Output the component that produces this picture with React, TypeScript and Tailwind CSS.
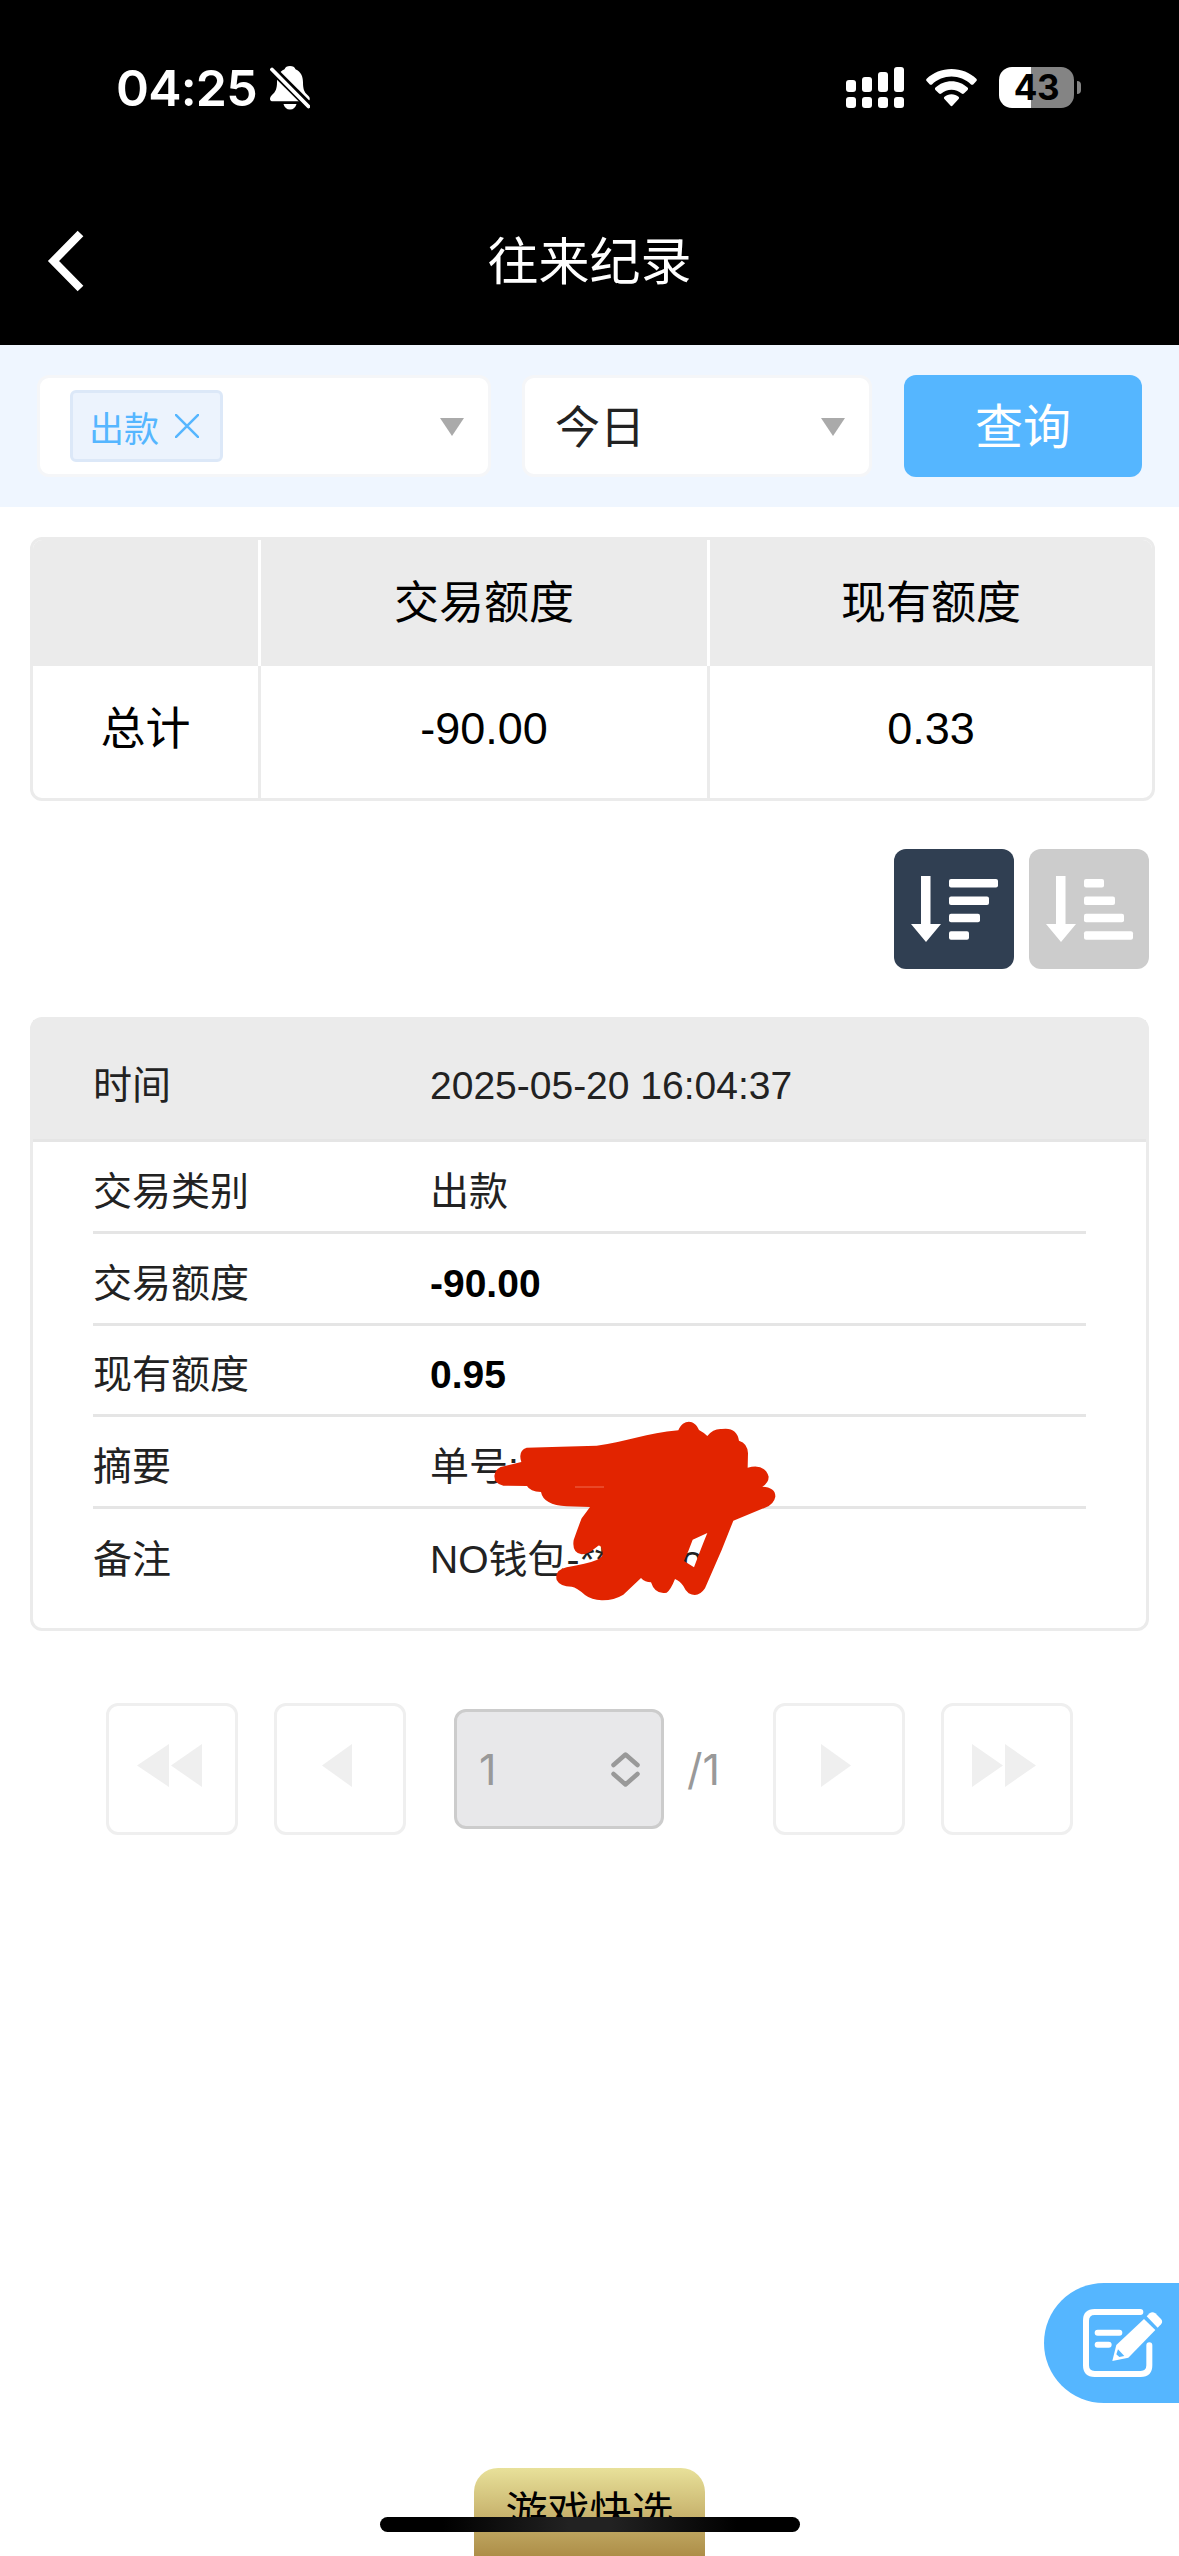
import type { ReactNode } from 'react'

const detailRows: { label: string; value: string; strong?: boolean }[] = [
  { label: '交易类别', value: '出款' },
  { label: '交易额度', value: '-90.00', strong: true },
  { label: '现有额度', value: '0.95', strong: true },
  { label: '摘要', value: '单号:' },
  { label: '备注', value: 'NO钱包-****** o' },
]

const signalBars = ['h-3', 'h-[15px]', 'h-5', 'h-[25px]']

const sortBars = [49, 40, 31, 20]

function StatusBar() {
  return (
    <div className="flex h-[175px] items-start justify-between pr-[98px] pl-[116px]">
      <div className="flex items-center pt-[58px]">
        <span className="w-[141px] font-['Inter',sans-serif] text-[50px] leading-[60px] font-semibold tracking-[-0.8px] whitespace-nowrap">
          04:25
        </span>
        <svg className="ml-[13px] h-11 w-10" viewBox="0 0 40 44">
          <path
            fill="#fff"
            d="M20 0c3 0 4.500 1 5.500 3.200C31 5.500 33 10.500 33 16.500c0 6 1 9.500 4.500 12.500 2 1.800 2.500 3 2.200 4.500-.3 1.300-1.200 1.700-2.700 1.700H3c-1.800 0-3-.7-3-2.300 0-1.400.6-2.500 2-3.900 3.500-3 5-6.500 5-12.500 0-6 2-11 7.500-13.300C15.500 1 17 0 20 0z"
          />
          <path fill="#fff" d="M13.500 38h13c-.8 3.500-3.200 5.500-6.500 5.500s-5.700-2-6.500-5.500z" />
          <path stroke="#000" strokeWidth="8" d="M0 1l42 42" />
          <path stroke="#fff" strokeWidth="3.800" strokeLinecap="round" d="M2 3.500l36.500 37" />
        </svg>
      </div>
      <div className="flex pt-[67px]">
        <div className="flex h-[41px] items-end gap-1.5">
          {signalBars.map((height) => (
            <div key={height} className="flex flex-col gap-[5px]">
              <div className={`w-2.5 rounded-[3px] bg-white ${height}`} />
              <div className="h-[11px] w-2.5 rounded-[3px] bg-white" />
            </div>
          ))}
        </div>
        <svg className="ml-[22px] h-[41px] w-[51px]" viewBox="0 0 51 41" fill="#fff">
          <path d="M25.500 2C35 2 44 5.600 50.300 11.800c.7.700.7 1.600.1 2.300l-3.200 3.300c-.6.600-1.500.6-2.200 0C39.700 12.400 32.800 9.600 25.500 9.600S11.300 12.400 6 17.400c-.7.600-1.600.6-2.200 0L.6 14.100c-.6-.7-.6-1.600.1-2.300C7 5.600 16 2 25.500 2z" />
          <path d="M25.500 14.300c6.100 0 11.800 2.400 16 6.300.7.700.7 1.600.1 2.300l-3.700 3.700c-.6.600-1.500.6-2.200 0-2.800-2.500-6.400-3.900-10.200-3.900s-7.400 1.400-10.200 3.900c-.7.600-1.600.6-2.200 0l-3.700-3.700c-.6-.7-.6-1.600.1-2.300 4.200-3.900 9.900-6.300 16-6.300z" />
          <path d="M25.500 27.300c2.700 0 5.200.9 7 2.500.7.600.7 1.500.1 2.200l-6 6.600c-.7.700-1.500.7-2.200 0l-6-6.600c-.6-.7-.6-1.600.1-2.200 1.800-1.600 4.300-2.500 7-2.500z" />
        </svg>
        <div className="ml-[22px] flex h-[41px] w-[75px] items-center justify-center rounded-[13px] bg-[linear-gradient(90deg,#fff_32px,#848484_32px)] font-['Inter',sans-serif] text-[35px] leading-none font-bold tracking-[-0.5px] text-black">
          43
        </div>
        <div className="mt-[14px] ml-[3px] h-[13px] w-1 rounded-r-full bg-[#848484]" />
      </div>
    </div>
  )
}

function Caret() {
  return (
    <svg className="mt-0.5 h-[18px] w-6" viewBox="0 0 24 18">
      <path fill="#aaa" d="M0 0h24L12 18z" />
    </svg>
  )
}

function Filters() {
  return (
    <section className="flex h-[162px] items-center bg-[#eff6ff] pr-[37px] pl-[37px]">
      <div className="flex h-[102px] w-[454px] items-center justify-between rounded-xl border-[3px] border-[#f5f6f8] bg-white pr-6 pl-[30px]">
        <div className="flex h-[72px] w-[153px] items-center rounded-md border-[3px] border-[#dce8f8] bg-[#ecf3fd] pl-4 text-[35px] leading-none text-[#55b6ff]">
          <span className="pt-1.5">出款</span>
          <svg className="ml-4 h-6 w-6" viewBox="0 0 24 24">
            <path stroke="#55b6ff" strokeWidth="2.500" d="M0 0l24 24M24 0L0 24" />
          </svg>
        </div>
        <Caret />
      </div>
      <div className="ml-[31px] flex h-[102px] w-[350px] items-center justify-between rounded-xl border-[3px] border-[#f5f6f8] bg-white pr-6 pl-[30px] text-[45px] text-[#222]">
        <span className="pt-1 leading-none">今日</span>
        <Caret />
      </div>
      <button
        type="button"
        className="ml-8 flex h-[102px] w-[238px] items-center justify-center rounded-xl bg-[#55b6ff] pt-1 text-5xl leading-none text-white"
      >
        查询
      </button>
    </section>
  )
}

function SummaryTable() {
  return (
    <section className="mt-[30px] ml-[30px] w-[1125px] overflow-hidden rounded-xl border-[3px] border-[#ebebeb] text-[45px] leading-none">
      <div className="grid h-[126px] grid-cols-[228px_449px_1fr] bg-[#ebebeb] text-center">
        <div className="border-r-[3px] border-white" />
        <div className="flex items-center justify-center border-r-[3px] border-white">交易额度</div>
        <div className="flex items-center justify-center">现有额度</div>
      </div>
      <div className="grid h-[132px] grid-cols-[228px_449px_1fr]">
        <div className="flex items-center justify-center border-r-[3px] border-[#ebebeb] pb-1.5">总计</div>
        <div className="flex items-center justify-center border-r-[3px] border-[#ebebeb] pb-2">-90.00</div>
        <div className="flex items-center justify-center pb-2">0.33</div>
      </div>
    </section>
  )
}

function SortButton({ ascending }: { ascending?: boolean }) {
  const bars = ascending ? [...sortBars].reverse() : sortBars

  return (
    <button
      type="button"
      className={`size-[120px] rounded-xl ${ascending ? 'bg-[#ccc]' : 'bg-[#303f52]'}`}
    >
      <svg viewBox="0 0 120 120" fill="#fff">
        <path d="M27 27h9.500v48H47L32 93 17 75h10z" />
        {bars.map((width, i) => (
          <rect key={width} x="55" y={30 + i * 17.400} width={width} height="8.500" rx="2" />
        ))}
      </svg>
    </button>
  )
}

// Marker strokes that hide the order number and wallet address
function Redaction() {
  return (
    <svg className="absolute top-[360px] left-[367px] h-[270px] w-[440px]" viewBox="0 0 1320 810">
      <path
        fill="#e22400"
        fillRule="evenodd"
        d="M380 203Q480 200 590 197C680 185 740 160 835 151C850 115 885 118 897 150Q912 158 922 168Q940 145 965 147Q1010 140 1017 182Q1043 190 1044 220L1043 263Q1095 250 1106 290Q1106 308 1087 320Q1127 322 1126 350Q1122 373 1095 383L1000 422L965 510L915 625Q895 655 866 640Q855 630 850 618Q840 603 825 597Q812 630 800 638Q765 645 753 607Q735 607 723 594L670 644Q640 662 605 661Q575 660 555 645Q530 622 515 620Q480 620 470 600Q463 570 500 562Q560 552 590 540Q610 530 608 518Q605 495 595 497L578 510Q565 522 545 523Q515 518 521 480Q535 440 545 415Q560 395 570 381L500 379Q430 375 423 336Q390 335 381 318L310 317Q283 312 283 288Q285 262 315 258L364 246Q353 212 380 203ZM922 459L878 479Q865 515 852 543L882 562Q905 500 922 459Z"
      />
      <path stroke="#ee5a3c" strokeWidth="4" d="M525 321h87" />
    </svg>
  )
}

function RecordCard() {
  return (
    <section className="relative mt-12 ml-[30px] h-[614px] w-[1119px] rounded-xl border-[3px] border-[#ebebeb] text-[39px] leading-none text-[#222]">
      <div className="flex h-[122px] items-center border-b-[3px] border-[#e5e5e5] bg-[#ebebeb] pt-[11px] pl-[60px]">
        <span className="w-[337px]">时间</span>
        <span>2025-05-20 16:04:37</span>
      </div>
      <div className="px-[60px]">
        {detailRows.map((row) => (
          <div
            key={row.label}
            className="flex h-[91.800px] items-center border-b-[3px] border-[#e5e5e5] pt-2.5 last:border-b-0 last:pt-2"
          >
            <span className="w-[337px]">{row.label}</span>
            <span className={row.strong ? 'font-bold text-black' : ''}>{row.value}</span>
          </div>
        ))}
      </div>
      <Redaction />
    </section>
  )
}

function PageButton({ children }: { children: ReactNode }) {
  return (
    <button
      type="button"
      disabled
      className="block size-[132px] rounded-xl border-[3px] border-[#efefef]"
    >
      <svg viewBox="0 0 126 126" fill="#efefef">
        {children}
      </svg>
    </button>
  )
}

function Pagination() {
  return (
    <nav className="mt-[72px] flex items-center pl-[106px] font-['Inter',sans-serif] text-[43px] leading-none text-[#999]">
      <PageButton>
        <path d="M60 38v43L28 59.500zM93 38v43L62 59.500z" />
      </PageButton>
      <div className="ml-9">
        <PageButton>
          <path d="M75 38v43L45 59.500z" />
        </PageButton>
      </div>
      <div className="ml-12 flex h-[120px] w-[210px] items-center justify-between rounded-xl border-[3px] border-[#ccc] bg-[#e8e8ea] pr-[21px] pl-[22px]">
        <span>1</span>
        <svg className="h-[35px] w-[29px]" viewBox="0 0 29 35" fill="none">
          <path
            stroke="#999"
            strokeWidth="4.500"
            strokeLinecap="round"
            strokeLinejoin="round"
            d="M2.500 13L14.500 2.500l12 10.500M2.500 22l12 10.500 12-10.500"
          />
        </svg>
      </div>
      <span className="ml-[23px] w-[86px]">/1</span>
      <PageButton>
        <path d="M45 38v43l30-21.500z" />
      </PageButton>
      <div className="ml-9">
        <PageButton>
          <path d="M28 38v43l31-21.500zM61 38v43l31-21.500z" />
        </PageButton>
      </div>
    </nav>
  )
}

function FeedbackButton() {
  return (
    <button type="button" className="absolute top-[2283px] right-0 h-[120px] w-[135px] rounded-l-full bg-[#55b6ff]">
      <svg className="h-[120px] w-[135px]" viewBox="132 69 405 360" fill="none">
        <path
          stroke="#fff"
          strokeWidth="18"
          strokeLinecap="round"
          d="M421 156H284q-26 0-26 26v134q0 26 26 26h138q26 0 26-26v-60M293 218h65M293 254h33"
        />
        <path fill="#fff" d="M432 177l34 33-81 83-48 10 12-48z" />
        <path fill="#fff" d="M440 169l9-9q8-7 17 0l17 17q7 8 0 16l-10 10z" />
        <path fill="#55b6ff" d="M354 268l19 20-15 3-9-8z" />
      </svg>
    </button>
  )
}

export default function App() {
  return (
    <div className="relative h-[2556px] w-[1179px] overflow-hidden bg-white font-['Liberation_Sans','Noto_Sans_CJK_SC',sans-serif] text-black">
      <header className="h-[345px] bg-black text-white">
        <StatusBar />
        <div className="grid h-[170px] grid-cols-[1fr_auto_1fr] items-center">
          <svg className="mt-0.5 ml-[46px] h-[62px] w-10" viewBox="0 0 40 62" fill="none">
            <path stroke="#fff" strokeWidth="8" d="M34.500 3.500L7.500 31l27 27.500" />
          </svg>
          <h1 className="pt-[5px] text-[51px] leading-none">往来纪录</h1>
        </div>
      </header>
      <Filters />
      <SummaryTable />
      <div className="mt-12 flex justify-end gap-[15px] pr-[30px]">
        <SortButton />
        <SortButton ascending />
      </div>
      <RecordCard />
      <Pagination />
      <FeedbackButton />
      <div className="absolute bottom-0 left-[474px] flex h-[88px] w-[231px] justify-center rounded-t-3xl bg-linear-to-b from-[#e8e19a] to-[#ad8e48] pt-[24px] text-[42px] leading-none">
        游戏快选
      </div>
      <div className="absolute top-[2517px] left-[380px] h-[15px] w-[420px] rounded-full bg-[linear-gradient(90deg,#000_15%,#222_45%,#222_55%,#000_85%)]" />
    </div>
  )
}
